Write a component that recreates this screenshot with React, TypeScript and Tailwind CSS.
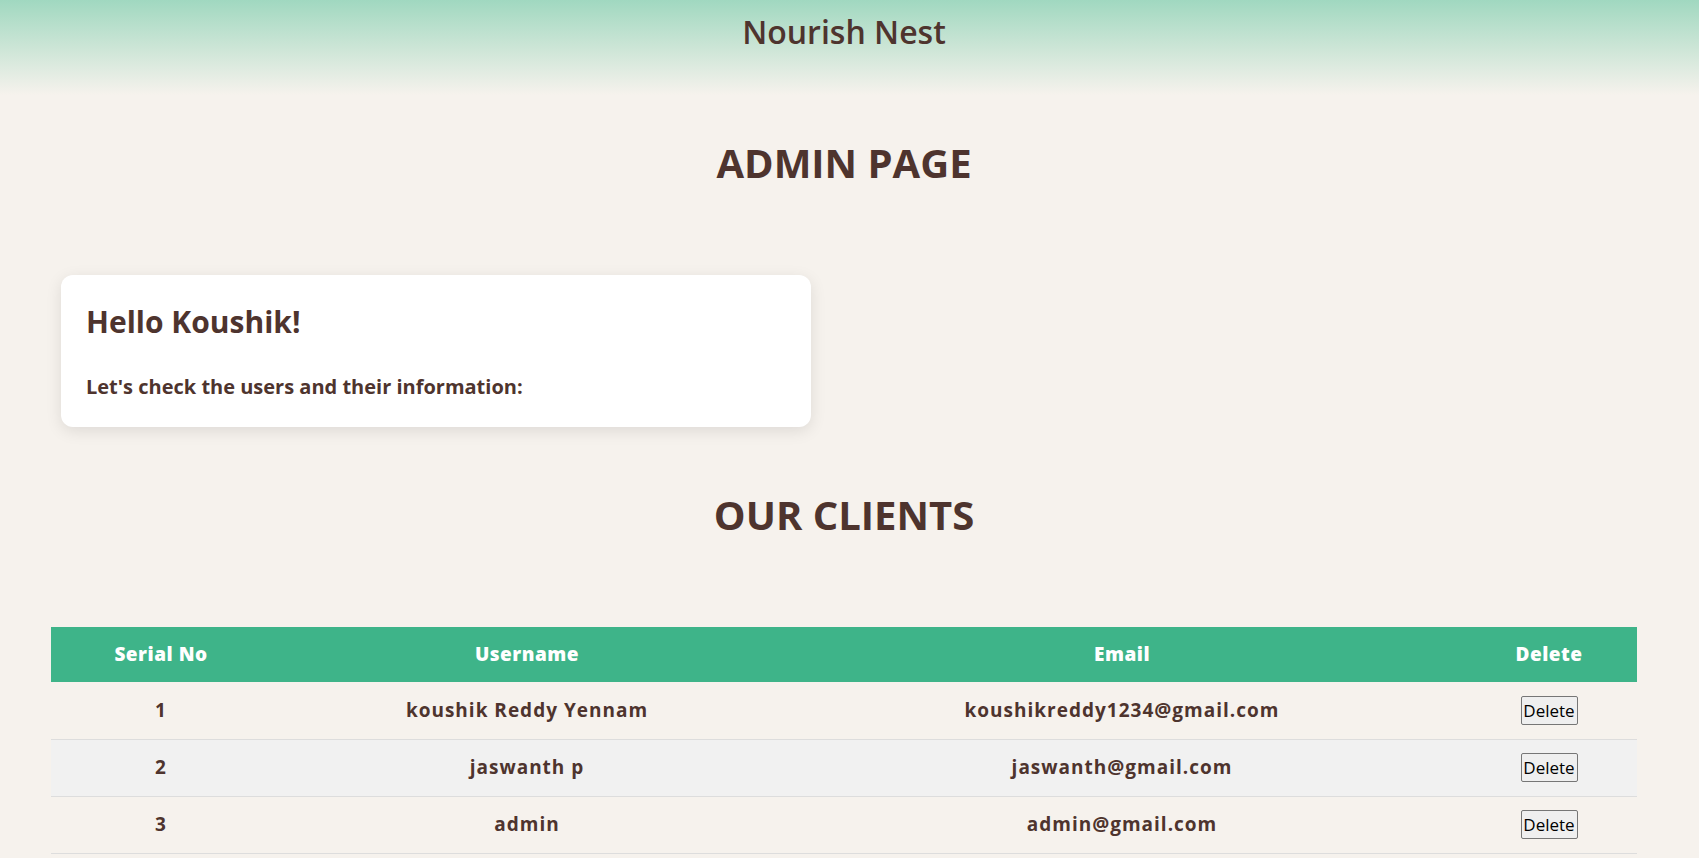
import React from "react";

type clientType = {
  id: number;
  username: string;
  email: string;
};

const clients: clientType[] = [
  { id: 1, username: "koushik Reddy Yennam", email: "koushikreddy1234@gmail.com" },
  { id: 2, username: "jaswanth p", email: "jaswanth@gmail.com" },
  { id: 3, username: "admin", email: "admin@gmail.com" },
];

export default function App() {
  return (
    <div
      className="min-h-screen bg-[#f6f2ed] text-[#4e342e]"
      style={{ fontFamily: '"Open Sans", "Liberation Sans", sans-serif' }}
    >
      {/* Header */}
      <header className="h-[95px] bg-gradient-to-b from-[#a0d8c0] to-[#f6f2ed] pr-[11px] pt-[10px] text-center">
        <h1 className="text-[32px] font-semibold leading-[44px]">Nourish Nest</h1>
      </header>

      <h2 className="mt-[44px] pr-[11px] text-center text-[40px] font-bold leading-[48px]">
        ADMIN PAGE
      </h2>

      {/* Greeting card */}
      <div className="ml-[61px] mt-[88px] w-[750px] rounded-[12px] bg-white px-[25px] pb-[25px] pt-[24px] shadow-[0_4px_16px_rgba(0,0,0,0.1)]">
        <h3 className="text-[30px] font-bold">Hello Koushik!</h3>
        <p className="mt-[28px] text-[20px] font-bold">
          Let's check the users and their information:
        </p>
      </div>

      <h2 className="mt-[64px] pr-[11px] text-center text-[40px] font-bold leading-[48px]">
        OUR CLIENTS
      </h2>

      {/* Clients table */}
      <table className="ml-[51px] mt-[88px] w-[1586px] table-fixed border-collapse text-[19px] font-bold tracking-[1px]">
        <colgroup>
          <col className="w-[220px]" />
          <col className="w-[512px]" />
          <col className="w-[678px]" />
          <col className="w-[176px]" />
        </colgroup>
        <thead>
          <tr className="h-[55px] bg-[#3eb489] text-white">
            <th className="font-extrabold tracking-[0.5px]">Serial No</th>
            <th className="font-extrabold tracking-[0.5px]">Username</th>
            <th className="font-extrabold tracking-[0.5px]">Email</th>
            <th className="font-extrabold tracking-[0.5px]">Delete</th>
          </tr>
        </thead>
        <tbody>
          {clients.map((client, i) => (
            <tr
              key={client.id}
              className={`h-[57px] border-b border-[#dddddd] text-center ${
                i % 2 === 1 ? "bg-[#f1f1f1]" : ""
              }`}
            >
              <td>{client.id}</td>
              <td>{client.username}</td>
              <td>{client.email}</td>
              <td>
                <button className="h-[29px] w-[57px] rounded-[2px] border border-[#767676] bg-[#efefef] text-[17px] font-normal tracking-normal text-black">
                  Delete
                </button>
              </td>
            </tr>
          ))}
        </tbody>
      </table>
    </div>
  );
}
